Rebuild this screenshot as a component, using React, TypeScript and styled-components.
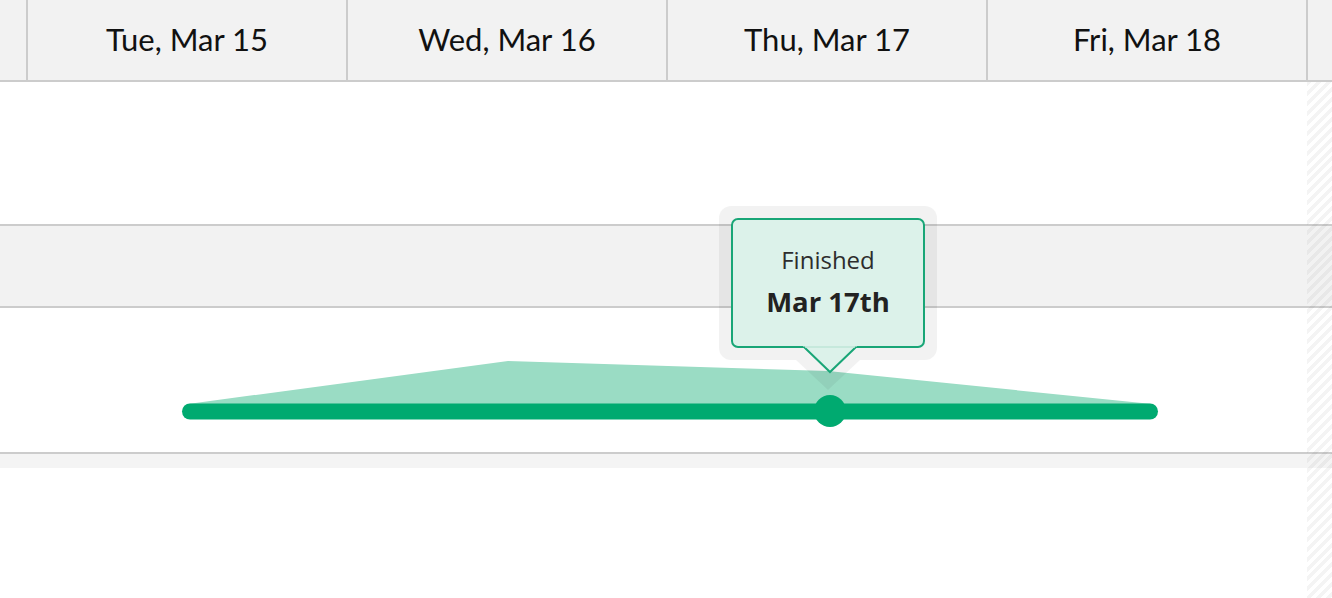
import React from 'react'
import styled, { createGlobalStyle } from 'styled-components'

const GlobalStyle = createGlobalStyle`
  html, body {
    margin: 0;
    padding: 0;
    background: #ffffff;
  }
  * {
    box-sizing: border-box;
  }
`

const Page = styled.div`
  position: relative;
  width: 1332px;
  height: 598px;
  overflow: hidden;
  background: #ffffff;
  font-family: "Open Sans", "Noto Sans", sans-serif;
`

const Header = styled.div`
  display: flex;
  height: 82px;
  background: #f2f2f2;
  border-bottom: 2px solid #cccccc;
`

const HeaderCell = styled.div<{ $width?: number; $first?: boolean }>`
  flex: ${(p) => (p.$width ? `0 0 ${p.$width}px` : '1 1 auto')};
  border-left: ${(p) => (p.$first ? 'none' : '2px solid #cccccc')};
  font-family: Lato, "Open Sans", sans-serif;
  font-size: 31px;
  line-height: 78px;
  color: #111111;
  text-align: center;
  white-space: nowrap;
`

const Row = styled.div<{ $height: number; $grey?: boolean }>`
  position: relative;
  height: ${(p) => p.$height}px;
  background: ${(p) => (p.$grey ? '#f2f2f2' : '#ffffff')};
  border-bottom: 2px solid #cccccc;
`

const Strip = styled.div`
  height: 14px;
  background: #f4f4f4;
`

const Hatch = styled.div`
  position: absolute;
  top: 82px;
  right: 0;
  bottom: 0;
  width: 25px;
  pointer-events: none;
  background: repeating-linear-gradient(
    135deg,
    rgba(0, 0, 0, 0.045) 0px,
    rgba(0, 0, 0, 0.045) 3.5px,
    transparent 3.5px,
    transparent 7px
  );
`

const ChartSvg = styled.svg`
  display: block;
`

const Tooltip = styled.div`
  position: absolute;
  left: 719px;
  top: 206px;
  width: 218px;
  height: 154px;
  padding: 12px;
  border-radius: 12px;
  background: rgba(0, 0, 0, 0.05);
`

const HaloArrow = styled.svg`
  position: absolute;
  left: 77px;
  top: 154px;
  overflow: visible;
`

const TipBox = styled.div`
  position: relative;
  width: 194px;
  height: 130px;
  border: 2px solid #19a677;
  border-radius: 7px;
  background: #dcf2ea;
  text-align: center;
  padding-top: 24px;
`

const TipArrow = styled.svg`
  position: absolute;
  left: 70px;
  top: 126px;
  overflow: visible;
`

const TipLabel = styled.div`
  font-size: 24px;
  line-height: 32px;
  color: #2d2d2d;
`

const TipValue = styled.div`
  margin-top: 8px;
  font-size: 27.5px;
  line-height: 36px;
  font-weight: 700;
  color: #222222;
`

const days = ['Tue, Mar 15', 'Wed, Mar 16', 'Thu, Mar 17', 'Fri, Mar 18']

// area points sit on the column centres, y measured inside the chart row
const area = [
  [188, 96],
  [508, 53],
  [828, 63],
  [1152, 96],
  [1152, 104],
  [188, 104],
]

function App() {
  const areaPoints = area.map(([x, y]) => `${x},${y}`).join(' ')

  return (
    <Page>
      <GlobalStyle />
      <Header>
        <HeaderCell $width={26} $first />
        {days.map((d) => (
          <HeaderCell key={d} $width={320}>
            {d}
          </HeaderCell>
        ))}
        <HeaderCell />
      </Header>

      <Row $height={144} />
      <Row $height={82} $grey />
      <Row $height={146}>
        <ChartSvg width="1332" height="144" viewBox="0 0 1332 144">
          <polygon points={areaPoints} fill="#9adcc4" />
          <line
            x1="190"
            y1="103.5"
            x2="1150"
            y2="103.5"
            stroke="#00aa70"
            strokeWidth="16"
            strokeLinecap="round"
          />
          <circle cx="830" cy="103" r="16" fill="#00aa70" />
        </ChartSvg>
      </Row>
      <Strip />

      <Hatch />

      <Tooltip>
        <HaloArrow width="64" height="30" viewBox="0 0 64 30">
          <polygon points="0,0 64,0 32,30" fill="rgba(0,0,0,0.05)" />
        </HaloArrow>
        <TipBox>
          <TipLabel>Finished</TipLabel>
          <TipValue>Mar 17th</TipValue>
          <TipArrow width="54" height="28" viewBox="0 0 54 28">
            <polygon points="0,0 54,0 27,27" fill="#dcf2ea" />
            <polyline
              points="1,1 27,26 53,1"
              fill="none"
              stroke="#19a677"
              strokeWidth="2"
            />
            <line x1="2" y1="1" x2="52" y2="1" stroke="#bfe6d7" strokeWidth="1.5" />
          </TipArrow>
        </TipBox>
      </Tooltip>
    </Page>
  )
}

export default App
